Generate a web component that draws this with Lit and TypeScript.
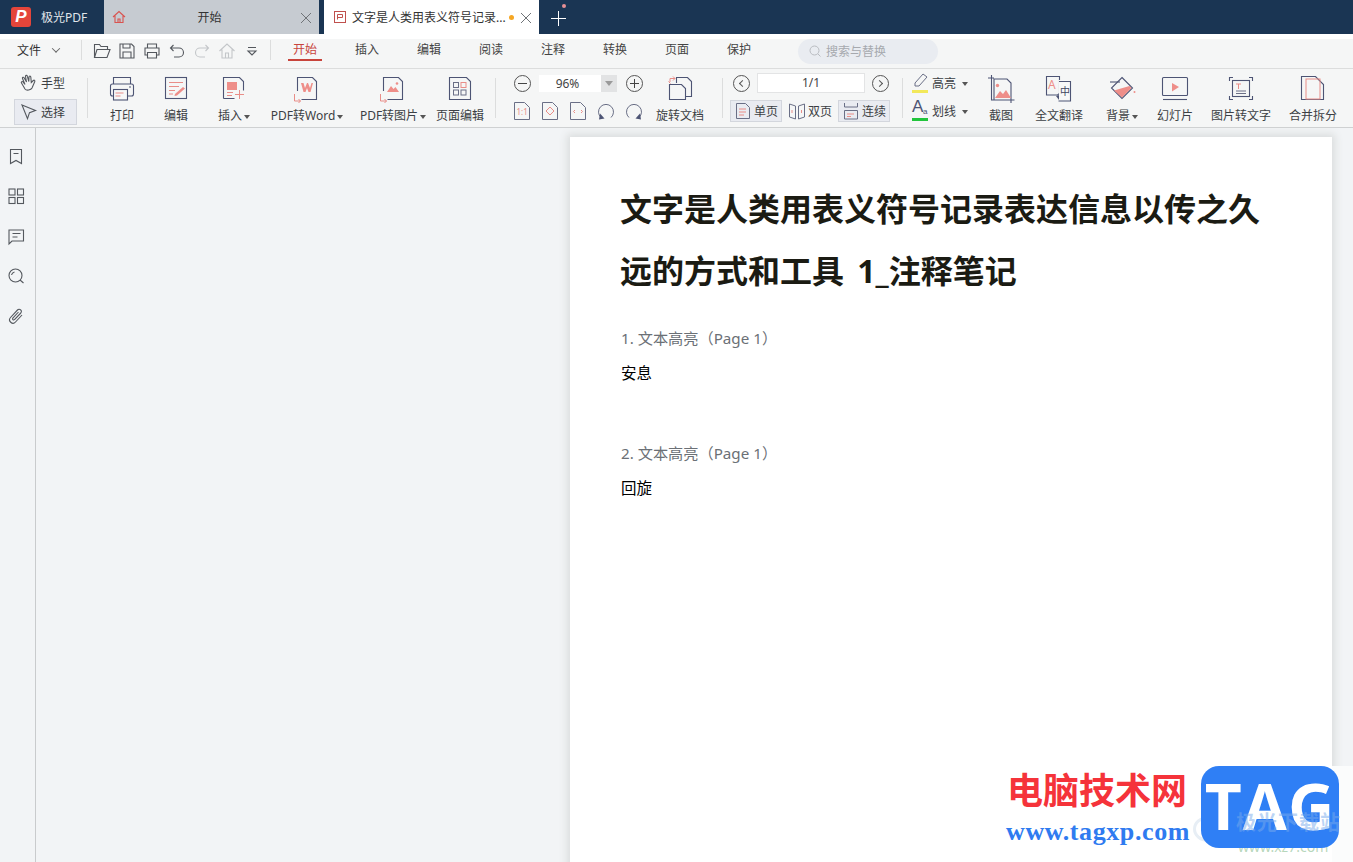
import { LitElement, html, svg, css } from "lit";
import { customElement } from "lit/decorators.js";

const sv = (w: number, h: number, body: unknown) =>
  html`<svg class="ic" width=${w} height=${h} viewBox="0 0 ${w} ${h}">${body}</svg>`;

/* 28x28 ribbon icons */
const ICONS: Record<string, unknown> = {
  print: sv(28, 28, svg`<path class="k" d="M5.5 9V2.500h17V9"/><rect class="k" x="2.500" y="9" width="23" height="12" rx="2"/><rect class="w" x="5.500" y="14.500" width="14" height="10.500"/><rect class="k" x="5.500" y="14.500" width="14" height="10.500"/><path class="r" d="M7.500 18h8M7.500 21h5"/><path class="k" d="M21 12h2"/>`),
  edit: sv(28, 28, svg`<rect class="k" x="3.500" y="2.500" width="21" height="21"/><path class="r" d="M7 7.500h14M7 11.500h10M7 15.500h6M7 19h4"/><path class="s" d="M13 19l8-7 2 1.500-8 7-2.500.5z"/>`),
  insert: sv(28, 28, svg`<path class="k" d="M3.500 23.500v-21h16l4 4v9M3.500 23.500h11"/><rect class="s" x="7" y="7" width="10" height="8"/><path class="r" d="M7 17.500h6M7 20.500h5M15 19.500h9M19.500 15v9"/>`),
  word: sv(28, 28, svg`<path class="k" d="M4.500 16V2.500h15l4 4v18h-15"/><path class="s" d="M8 8h2.500l1.500 5 2-5h1l2 5 1.500-5H20l-2.500 9h-2L14 13l-1.500 4h-2z"/><path class="r" d="M1.500 19v7h6M5.500 24l2 2-2 2"/>`),
  image: sv(28, 28, svg`<path class="k" d="M4.500 16V2.500h15l4 4v18h-15"/><path class="s" d="M8 17l4-6 2.500 3 2-2 3.500 5z"/><circle class="s" cx="18" cy="8.500" r="1.300"/><path class="r" d="M1.500 19v7h6M5.500 24l2 2-2 2"/>`),
  pages: sv(28, 28, svg`<path class="k" d="M3.500 2.500h17l4 4v18h-21z"/><rect class="k2" x="7.500" y="7.500" width="5" height="5"/><rect class="r" x="15" y="7.500" width="5" height="5"/><rect class="k2" x="7.500" y="15" width="5" height="5"/><rect class="k2" x="15" y="15" width="5" height="5"/>`),
  rotate: sv(28, 28, svg`<path class="k" d="M10.500 8V2.500h11l4 4v15h-6"/><path class="k" d="M3.500 9.500h12l4 4v11h-16z"/><path class="r" d="M4 7V3.500h5M7 1.500l2 2-2 2M4.500 8.500l-2-2"/>`),
  shot: sv(28, 28, svg`<path class="k" d="M1 3h6M4.500 0v5M7 4h13l4 4v17H7V4zM4.500 4v21h23M24 22v6"/><path class="s" d="M8 23l5-7 3 3 3-4 5 8z"/><circle class="s" cx="10.500" cy="10.500" r="1.700"/>`),
  trans: sv(28, 28, svg`<path class="k" d="M1.500 1.500h13v17l-2 1.500h-11z"/><path class="w" d="M14 5h11v19H14z"/><path class="k" d="M14 6.500h11.500v19.500h-12"/><text class="ta" x="3" y="14">A</text><text class="tb" x="15" y="20">中</text><path class="s2" d="M11 21l3-1v5z"/>`),
  bg: sv(28, 28, svg`<path class="k" d="M14 2.500L24.500 13 14 23.500 3.500 13z"/><path class="s" d="M6 15.500L21.500 11l2 2L14 22.500z"/><path class="k" d="M2 7h10"/><circle class="s" cx="26.500" cy="17" r="1"/>`),
  slide: sv(28, 28, svg`<rect class="k" x="1.500" y="2.500" width="25" height="18" rx="1"/><path class="k" d="M2 24.500h24"/><path class="s" d="M11 8l7 4-7 4.500z"/>`),
  ocr: sv(28, 28, svg`<path class="k" d="M6 2.500H2.500V6M22 2.500h3.500V6M6 24.500H2.500V21M22 24.500h3.500V21"/><rect class="k" x="5.500" y="5.500" width="17" height="16"/><path class="r" d="M9 9h5M11.500 9v5"/><path class="k2" d="M9 16h10M9 18.500h10"/>`),
  merge: sv(28, 28, svg`<path class="k" d="M2.500 1.500h14l8 8v15h-22z"/><rect class="r" x="7" y="4" width="14" height="20"/>`),
};

const small = {
  open: sv(20, 20, svg`<path class="d" d="M2.500 16.500v-13h5l1.500 2h6.500v3M2.500 16.500l2.500-8h13l-3 8z"/>`),
  save: sv(20, 20, svg`<path class="d" d="M3 3h11.500L17 5.500V17H3zM6 3v4h7V3M6 17v-6h8v6"/>`),
  print: sv(20, 20, svg`<path class="d" d="M5.500 7V3h9v4M5.500 14H3V7h14v7h-2.500M5.500 11.500h9V17h-9z"/>`),
  undo: sv(20, 20, svg`<path class="d" d="M6.500 4L3.500 7l3 3M3.500 7H12a4.500 4.500 0 0 1 0 9H7"/>`),
  redo: sv(20, 20, svg`<path class="l" d="M13.500 4l3 3-3 3M16.500 7H8a4.500 4.500 0 0 0 0 9h5"/>`),
  home: sv(20, 20, svg`<path class="l" d="M2.500 10L10 3l7.500 7M5 8.500V17h10V8.500M8.500 17v-5h3v5"/>`),
  more: sv(20, 20, svg`<path class="d" d="M6 6.500h8M6 10l4 4 4-4z"/>`),
};

const mini = {
  one: sv(18, 20, svg`<path class="k2" d="M1.500 1.500h10l5 5v12h-15z"/><text class="tm" x="3.500" y="14">1:1</text>`),
  fit: sv(18, 20, svg`<path class="k2" d="M1.500 1.500h10l5 5v12h-15z"/><path class="r" d="M9 6l4 4-4 4-4-4z"/>`),
  width: sv(18, 20, svg`<path class="k2" d="M1.500 1.500h10l5 5v12h-15z"/><path class="r" d="M6 9l-1.500 1.500L6 12M12 9l1.500 1.500L12 12"/>`),
  ccw: sv(18, 20, svg`<path class="k2" d="M4 16.500a7.500 7.500 0 1 1 10 0"/><path class="f" d="M3 12.500l4.500 5-5.500 1z"/>`),
  cw: sv(18, 20, svg`<path class="k2" d="M14 16.500a7.500 7.500 0 1 0-10 0"/><path class="f" d="M15 12.500l-4.500 5 5.500 1z"/>`),
  single: sv(16, 18, svg`<path class="k2" d="M1.500 1.500h9l4 4v11h-13z"/><path class="r" d="M4 7h7M4 10h7M4 13h5"/>`),
  double: sv(16, 18, svg`<path class="k2" d="M.5 2l6 2v13l-6-2zM15.500 2l-6 2v13l6-2z"/><path class="r" d="M3 8v3M12.500 8v3"/>`),
  cont: sv(16, 18, svg`<path class="k2" d="M1.500 1v4h13V1M1.500 8.500h13V17h-13z"/><path class="r" d="M4 12h7M4 14.500h4"/>`),
  pen: sv(20, 20, svg`<path class="k2" d="M4 12L12 3l4 3-8 9H4z"/>`),
};

const side = [
  sv(18, 18, svg`<path class="d" d="M3.500 2.500h11v14l-5.500-3-5.500 3zM6.500 6.500h5"/>`),
  sv(18, 18, svg`<rect class="d" x="2" y="2" width="6" height="6"/><rect class="d" x="10.500" y="2" width="6" height="6"/><rect class="d" x="2" y="10.500" width="6" height="6"/><rect class="d" x="10.500" y="10.500" width="6" height="6"/>`),
  sv(18, 18, svg`<path class="d" d="M2 3h14.500v11H5l-3 3zM5.500 6.500h8M5.500 10h5"/>`),
  sv(18, 18, svg`<circle class="d" cx="8.500" cy="8.500" r="6.500"/><path class="d" d="M13 13l3.500 3M4.500 8a4 4 0 0 1 3-3"/>`),
  sv(18, 18, svg`<path class="d" d="M15 8l-6.500 7a3.300 3.300 0 0 1-5-4.500L10.500 3a2.200 2.200 0 0 1 3.300 3L7.500 12.500a1 1 0 0 1-1.700-1.300L11.500 5"/>`),
];

const TABS = ["开始", "插入", "编辑", "阅读", "注释", "转换", "页面", "保护"];

@customElement("app-root")
export class AppRoot extends LitElement {
  static styles = css`
    :host {
      display: block;
      position: relative;
      width: 1353px;
      height: 862px;
      overflow: hidden;
      background: #f2f4f6;
      font-family: "Noto Sans", "Noto Sans CJK SC", sans-serif;
      font-size: 12px;
      color: #3c3f44;
    }
    svg.ic { display: block; overflow: visible; flex: none; }
    .k { fill: none; stroke: #4d5474; stroke-width: 1.100; }
    .k2 { fill: none; stroke: #6a6f86; stroke-width: 1; }
    .d { fill: none; stroke: #54585e; stroke-width: 1.100; }
    .l { fill: none; stroke: #c3c6c9; stroke-width: 1.100; }
    .r { fill: none; stroke: #e98d88; stroke-width: 1; }
    .s { fill: #ee8e89; }
    .s2 { fill: #4d5474; }
    .f { fill: #4d5474; }
    .w { fill: #f7f8f8; stroke: none; }
    .ta { font-size: 12px; fill: #ee8e89; }
    .tb { font-size: 10px; fill: #3f4660; }
    .tm { font-size: 8px; fill: #e98d88; }

    .tabbar { display: flex; height: 34px; background: #1a3553; }
    .brand { width: 104px; display: flex; align-items: center; flex: none; color: #e0e5ea; }
    .logo {
      width: 20px; height: 20px; margin: 0 10px 0 11px; border-radius: 3px;
      background: #e4453a; color: #fff; font: italic bold 17px/20px "Liberation Sans", sans-serif;
      text-align: center;
    }
    .tab { width: 215px; display: flex; align-items: center; flex: none; position: relative; }
    .tab.home { background: #c6cbd1; margin-right: 5px; color: #333; }
    .tab.doc { background: #fff; height: 39px; padding-bottom: 5px; box-sizing: border-box; color: #333; z-index: 1; }
    .tab.home .ti { position: absolute; left: 8px; top: 10px; }
    .tab.home .tt { flex: 1; text-align: center; padding-right: 4px; }
    .x { position: absolute; top: 12px; right: 7px; }
    .xl { fill: none; stroke: #6f7377; stroke-width: 1; }
    .doc .di { margin: 0 6px 0 10px; }
    .dot { width: 5px; height: 5px; border-radius: 50%; background: #f5a623; margin-left: 3px; }
    .plus { position: relative; margin-left: 12px; width: 14px; height: 14px; align-self: center; margin-top: 1px; }
    .plus i { position: absolute; left: 7px; top: 0; width: 1px; height: 15px; background: #fff; }
    .plus b { position: absolute; left: 0; top: 7px; width: 15px; height: 1px; background: #fff; }
    .plus u { position: absolute; left: 11px; top: -7px; width: 4px; height: 4px; border-radius: 50%; background: #e78f95; }
    .strip { height: 5px; background: #fff; }

    .menu {
      display: flex; height: 30px; box-sizing: border-box; background: #f5f6f6;
      border-bottom: 1px solid #dcdddd; padding-left: 17px;
    }
    .menu > * { flex: none; }
    .file { width: 64px; height: 22px; display: flex; align-items: center; gap: 10px; color: #333; }
    .chev { width: 5px; height: 5px; border: solid #666; border-width: 0 1px 1px 0; transform: rotate(45deg) translate(-1px, -1px); margin-left: 2px; }
    .vsep { width: 1px; height: 20px; background: #dcdddd; margin-top: 1px; }
    .qa { display: flex; width: 175px; margin: 0 6px 0 7px; }
    .qa span { width: 25px; height: 24px; display: flex; align-items: center; justify-content: center; }
    .mtab { width: 62px; height: 22px; display: flex; justify-content: center; line-height: 21px; color: #444; }
    .mtab span { position: relative; height: 22px; padding: 0 5px; }
    .mtab.on { color: #c8443c; }
    .mtab.on span::after {
      content: ""; position: absolute; left: 0; right: 0; bottom: 0; height: 2px; background: #c8443c;
    }
    .tabs { display: flex; margin-left: 3px; }
    .search {
      width: 140px; height: 25px; margin: -0.500px 0 0 28px; border-radius: 13px; background: #e9ecf1;
      display: flex; align-items: center; color: #a6a9ae; padding-left: 11px; box-sizing: border-box; gap: 5px;
    }
    .sq { fill: none; stroke: #b9bcc1; stroke-width: 1; }

    .ribbon {
      display: grid;
      grid-template-columns: 63px 20px 50px 58px 58px 88px 84px 50px 20px 141px 68px 16px 162px 20px 62px 54px 62px 64px 42px 90px 54px;
      height: 59px; box-sizing: border-box; padding-left: 14px;
      background: #f5f6f6; border-bottom: 1px solid #cfd1d2;
    }
    .rsep { width: 1px; height: 40px; background: #dcdddd; margin-top: 9px; justify-self: center; }
    .tool { display: flex; flex-direction: column; align-items: center; padding-top: 6px; white-space: nowrap; color: #3c3f44; }
    .tool svg { margin-bottom: 4px; }
    .tool label { line-height: 18px; display: flex; align-items: center; }
    .caret {
      display: inline-block; width: 0; height: 0; margin-left: 2px; margin-top: 2px;
      border: 3.500px solid transparent; border-top: 4px solid #555; border-bottom: 0;
    }
    .hand { display: grid; grid-template-rows: 28px 28px; }
    .hrow { display: flex; align-items: center; gap: 3px; padding-left: 6px; }
    .hrow.sel {
      height: 26px; margin-top: 2px; box-sizing: border-box; background: #e9ebf1; border: 1px solid #d3d6dd; padding-left: 5px;
    }
    .zoom { display: grid; grid-template-rows: 28px 28px; }
    .zrow { display: flex; align-items: center; }
    .circle {
      width: 15px; height: 15px; border: 1px solid #555; border-radius: 50%; position: relative; flex: none;
    }
    .circle::before { content: ""; position: absolute; left: 3px; right: 3px; top: 7px; height: 1px; background: #444; }
    .circle.p::after { content: ""; position: absolute; top: 3px; bottom: 3px; left: 7px; width: 1px; background: #444; }
    .zoom .zrow:first-child { padding-left: 9px; }
    .combo {
      width: 78px; height: 17px; margin: 0 9px 0 8px; background: #fff; display: flex; align-items: center; color: #444;
    }
    .combo span { flex: 1; text-align: center; padding-right: 5px; }
    .combo i { width: 16px; height: 17px; background: #e2e3e4; display: flex; align-items: center; justify-content: center; }
    .combo i::before { content: ""; border: 4px solid transparent; border-top: 5px solid #9a9a9a; border-bottom: 0; }
    .icons5 { display: flex; gap: 10px; padding-left: 8px; }
    .nav { display: grid; grid-template-rows: 28px 28px; }
    .nav .zrow:first-child { padding-left: 3px; }
    .arrow { width: 15px; height: 15px; border: 1px solid #555; border-radius: 50%; display: flex; align-items: center; justify-content: center; flex: none; }
    .arrow::before { content: ""; width: 4px; height: 4px; border: solid #555; border-width: 0 0 1px 1px; transform: translateX(1px) rotate(45deg); }
    .arrow.n::before { transform: translateX(-1px) rotate(225deg); }
    .pg {
      width: 108px; height: 20px; margin: 0 7px 0 7px; background: #fff; border: 1px solid #e3e4e5; box-sizing: border-box;
      text-align: center; line-height: 18px; color: #444;
    }
    .views { display: flex; gap: 3px; align-items: flex-start; padding-top: 3px; }
    .v { height: 22px; display: flex; align-items: center; gap: 3px; padding: 0 3px 0 4px; box-sizing: border-box; }
    .v.on { background: #e9ebf1; border: 1px solid #d3d6dd; }
    .hl { display: grid; grid-template-rows: 28px 28px; }
    .hlr { display: flex; align-items: center; gap: 4px; }
    .hi { position: relative; width: 16px; height: 22px; flex: none; }
    .hi svg { position: absolute; left: -1px; top: -1px; }
    .hi b { position: absolute; left: 0; right: 0; bottom: 1px; height: 3px; }
    .hi .A { position: absolute; left: 0; top: -3px; font: 17px/20px "Liberation Sans", sans-serif; color: #4d5474; }
    .hi .a { position: absolute; left: 11px; top: 6px; font: 8px/12px "Liberation Sans", sans-serif; color: #4d5474; }
    .hlr .caret { margin-left: 2px; }

    .body { display: flex; height: 734px; }
    .side {
      width: 36px; flex: none; box-sizing: border-box; border-right: 1px solid #c9cbcd;
      display: flex; flex-direction: column; align-items: center; padding: 19px 3px 0 0; gap: 22px; background: #f2f4f6;
    }
    .main { flex: 1; padding: 9px 0 0 534px; overflow: hidden; }
    .page {
      width: 762px; height: 760px; box-sizing: border-box; background: #fff; padding: 41px 51px 0;
      box-shadow: 0 0 8px 3px #dadddd; color: #111;
    }
    h1 { margin: 0 0 25px -1px; font-size: 32px; font-weight: 700; line-height: 62px; color: #1b1b13; word-spacing: 5px; }
    .ph { font-size: 15.200px; line-height: 22px; color: #6b7076; }
    .pt { font-size: 15.500px; line-height: 24px; color: #000; margin: 12px 0 57px; font-weight: 400; }

    .wm-red {
      position: absolute; left: 1007px; top: 763px; font-size: 36px; line-height: 50px; font-weight: 700;
      color: #f5333a; white-space: nowrap; font-family: "Noto Sans CJK SC", sans-serif;
    }
    .wm-url {
      position: absolute; left: 1006px; top: 817px; font: bold 26px/30px "Liberation Serif", serif;
      color: #2f7bf0; white-space: nowrap; letter-spacing: 0.600px;
    }
    .wm-back { position: absolute; left: 1332px; top: 766px; width: 21px; height: 96px; background: #fbfcfc; }
    .wm-swirl { position: absolute; left: 1193px; top: 816px; width: 30px; height: 26px; border-radius: 50%; border: 3px solid #e7eef5; box-sizing: border-box; }
    .wm-tag {
      position: absolute; left: 1201px; top: 766px; width: 138px; height: 82px; border-radius: 18px;
      background: #2f7ff5; color: #fff; text-align: center; font: 700 64px/80px "Open Sans", sans-serif; letter-spacing: 1px;
    }
    .wm-faint { position: absolute; left: 1236px; top: 810px; font-size: 20px; line-height: 26px; color: rgba(120, 170, 235, .5); font-weight: 700; white-space: nowrap; letter-spacing: 1px; }
    .wm-faint2 { position: absolute; left: 1238px; top: 838px; font-size: 14px; line-height: 18px; color: rgba(120, 180, 130, .55); white-space: nowrap; }
  `;

  private tool(icon: string, label: string, caret = false) {
    return html`<div class="tool">${ICONS[icon]}<label>${label}${caret ? html`<i class="caret"></i>` : ""}</label></div>`;
  }

  render() {
    const xIcon = html`<svg class="ic x" width="12" height="12" viewBox="0 0 12 12"><path class="xl" d="M1 1l10 10M11 1L1 11"/></svg>`;
    return html`
      <div class="tabbar">
        <div class="brand"><span class="logo">P</span>极光PDF</div>
        <div class="tab home">
          <svg class="ic ti" width="14" height="14" viewBox="0 0 14 14"><path fill="none" stroke="#d9534f" stroke-width="1.100" d="M1 7l6-5.500L13 7M3 5.500V12.500h8V5.500M6 12.500V9h2v3.500"/></svg>
          <span class="tt">开始</span>${xIcon}
        </div>
        <div class="tab doc">
          <svg class="ic di" width="12" height="12" viewBox="0 0 12 12"><rect x=".5" y=".5" width="11" height="11" fill="none" stroke="#c0504d"/><path fill="none" stroke="#c0504d" d="M3.500 8.500v-5h5v3h-5"/></svg>
          <span>文字是人类用表义符号记录...</span><i class="dot"></i>${xIcon}
        </div>
        <div class="plus"><i></i><b></b><u></u></div>
      </div>
      <div class="strip"></div>
      <div class="menu">
        <div class="file">文件<i class="chev"></i></div>
        <div class="vsep"></div>
        <div class="qa">
          <span>${small.open}</span><span>${small.save}</span><span>${small.print}</span><span>${small.undo}</span><span>${small.redo}</span><span>${small.home}</span><span>${small.more}</span>
        </div>
        <div class="vsep"></div>
        <div class="tabs">
          ${TABS.map((t, i) => html`<div class="mtab ${i === 0 ? "on" : ""}"><span>${t}</span></div>`)}
        </div>
        <div class="search">
          <svg class="ic" width="12" height="12" viewBox="0 0 12 12"><circle class="sq" cx="5.500" cy="5.500" r="4.500"/><path class="sq" d="M9 9l2.500 2.500"/></svg>
          搜索与替换
        </div>
      </div>
      <div class="ribbon">
        <div class="hand">
          <div class="hrow">
            <svg class="ic" width="18" height="18" viewBox="0 0 18 18"><path class="d" d="M5 15L1.500 9c-.7-1.200.7-2 1.500-1l2 2.500L2.500 4.500c-.5-1.200 1-1.800 1.600-.7L6.500 8 5.500 2.500c-.3-1.300 1.500-1.600 1.800-.3L8.800 7.500 9 3c0-1.300 1.800-1.200 1.800 0l.5 5.500 2-2c1-.8 2 .2 1.400 1.200L12 14c-1 2-5.500 3-7 1z"/></svg>
            手型
          </div>
          <div class="hrow sel">
            <svg class="ic" width="18" height="18" viewBox="0 0 18 18"><path class="d" d="M2 2l13.500 5.500-6 2.200-2 6z"/></svg>
            选择
          </div>
        </div>
        <div class="rsep"></div>
        ${this.tool("print", "打印")}
        ${this.tool("edit", "编辑")}
        ${this.tool("insert", "插入", true)}
        ${this.tool("word", "PDF转Word", true)}
        ${this.tool("image", "PDF转图片", true)}
        ${this.tool("pages", "页面编辑")}
        <div class="rsep"></div>
        <div class="zoom">
          <div class="zrow">
            <span class="circle"></span>
            <div class="combo"><span>96%</span><i></i></div>
            <span class="circle p"></span>
          </div>
          <div class="zrow icons5">${mini.one}${mini.fit}${mini.width}${mini.ccw}${mini.cw}</div>
        </div>
        ${this.tool("rotate", "旋转文档")}
        <div class="rsep"></div>
        <div class="nav">
          <div class="zrow"><span class="arrow"></span><div class="pg">1/1</div><span class="arrow n"></span></div>
          <div class="views">
            <div class="v on">${mini.single}单页</div>
            <div class="v">${mini.double}双页</div>
            <div class="v on">${mini.cont}连续</div>
          </div>
        </div>
        <div class="rsep"></div>
        <div class="hl">
          <div class="hlr"><span class="hi">${mini.pen}<b style="background:#f2e85a"></b></span>高亮<i class="caret"></i></div>
          <div class="hlr"><span class="hi"><span class="A">A</span><span class="a">a</span><b style="background:#22c43c"></b></span>划线<i class="caret"></i></div>
        </div>
        ${this.tool("shot", "截图")}
        ${this.tool("trans", "全文翻译")}
        ${this.tool("bg", "背景", true)}
        ${this.tool("slide", "幻灯片")}
        ${this.tool("ocr", "图片转文字")}
        ${this.tool("merge", "合并拆分")}
      </div>
      <div class="body">
        <div class="side">${side}</div>
        <div class="main">
          <div class="page">
            <h1>文字是人类用表义符号记录表达信息以传之久远的方式和工具 1_注释笔记</h1>
            <div class="ph">1. 文本高亮（Page 1）</div>
            <div class="pt">安息</div>
            <div class="ph">2. 文本高亮（Page 1）</div>
            <div class="pt">回旋</div>
          </div>
        </div>
      </div>
      <div class="wm-back"></div>
      <div class="wm-swirl"></div>
      <div class="wm-red">电脑技术网</div>
      <div class="wm-url">www.tagxp.com</div>
      <div class="wm-faint2">www.xz7.com</div>
      <div class="wm-tag">TAG</div>
      <div class="wm-faint">极光下载站</div>
    `;
  }
}
